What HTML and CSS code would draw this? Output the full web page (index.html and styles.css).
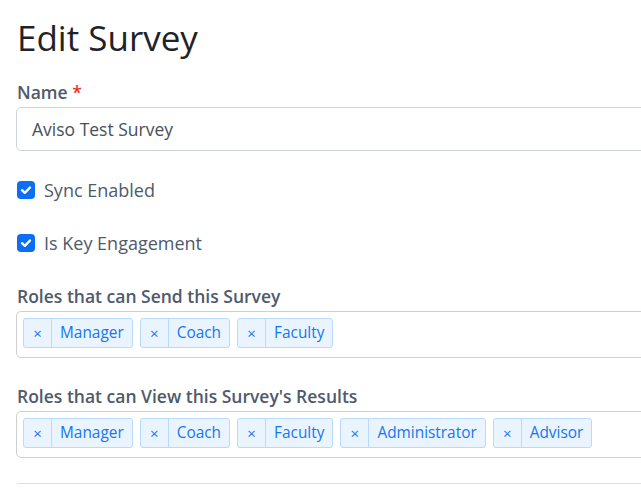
FILE: index.html
```html
<!DOCTYPE html>
<html>
<head>
<meta charset="utf-8">
<link rel="stylesheet" href="styles.css">
</head>
<body>
<div class="page">
  <h1 class="title">Edit Survey</h1>
  <div class="field">
    <label class="label">Name <span class="req">*</span></label>
    <div class="input">Aviso Test Survey</div>
  </div>
  <div class="check first">
    <span class="box"><svg viewBox="0 0 18 18" width="18" height="18"><path d="M5 9.2 L7.8 11.8 L13 6.5" fill="none" stroke="#fff" stroke-width="2.4" stroke-linecap="round" stroke-linejoin="round"/></svg></span>
    <span class="check-text">Sync Enabled</span>
  </div>
  <div class="check second">
    <span class="box"><svg viewBox="0 0 18 18" width="18" height="18"><path d="M5 9.2 L7.8 11.8 L13 6.5" fill="none" stroke="#fff" stroke-width="2.4" stroke-linecap="round" stroke-linejoin="round"/></svg></span>
    <span class="check-text">Is Key Engagement</span>
  </div>
  <div class="field roles">
    <label class="label">Roles that can Send this Survey</label>
    <div class="select">
      <span class="tag"><span class="x">×</span><span class="name">Manager</span></span>
      <span class="tag"><span class="x">×</span><span class="name">Coach</span></span>
      <span class="tag"><span class="x">×</span><span class="name">Faculty</span></span>
    </div>
  </div>
  <div class="field roles2">
    <label class="label">Roles that can View this Survey's Results</label>
    <div class="select">
      <span class="tag"><span class="x">×</span><span class="name">Manager</span></span>
      <span class="tag"><span class="x">×</span><span class="name">Coach</span></span>
      <span class="tag"><span class="x">×</span><span class="name">Faculty</span></span>
      <span class="tag"><span class="x">×</span><span class="name">Administrator</span></span>
      <span class="tag"><span class="x">×</span><span class="name">Advisor</span></span>
    </div>
  </div>
  <hr class="rule">
</div>
</body>
</html>
```
FILE: styles.css
```css
html, body {
  margin: 0;
  padding: 0;
  overflow: hidden;
  background: #fff;
}
body {
  font-family: "Open Sans", "Noto Sans", sans-serif;
  color: #212529;
}
.page {
  width: 800px;
  padding: 0 0 0 16px;
  display: flex;
  flex-direction: column;
}
.title {
  margin: 14px 0 0 0;
  font-size: 35px;
  font-weight: 400;
  line-height: 48px;
  color: #1f2328;
  padding-left: 1px;
}
.field {
  display: flex;
  flex-direction: column;
}
.field:first-of-type {
  margin-top: 19px;
}
.label {
  font-size: 17.5px;
  font-weight: 600;
  color: #4f5a6b;
  line-height: 22px;
  padding-left: 1px;
  margin-bottom: 4px;
}
.req {
  color: #e3342f;
}
.input {
  height: 42px;
  border: 1px solid #ced4da;
  border-radius: 5px;
  padding: 0 15px;
  font-size: 17.5px;
  line-height: 42px;
  color: #495057;
}
.check {
  display: flex;
  align-items: center;
  gap: 9px;
  height: 22px;
  padding-left: 1px;
}
.check.first { margin-top: 28px; }
.check.second { margin-top: 31px; }
.box {
  width: 18px;
  height: 18px;
  border-radius: 4px;
  background: #0b6ef5;
  display: flex;
}
.check-text {
  font-size: 18px;
  color: #4f5a6b;
  line-height: 22px;
}
.roles { margin-top: 31px; }
.roles2 { margin-top: 27px; }
.select {
  border: 1px solid #cfcfcf;
  border-radius: 5px;
  padding: 6px 6px 9px 6px;
  display: flex;
  gap: 7px;
}
.tag {
  display: flex;
  height: 28px;
  border: 1px solid #b7dafd;
  border-radius: 3px;
  background: #eaf4ff;
  color: #1576f0;
  font-size: 15.4px;
  line-height: 28px;
}
.tag .x {
  width: 27px;
  text-align: center;
  border-right: 1px solid #b7dafd;
  font-size: 15px;
}
.tag .name {
  padding: 0 8px;
}
.rule {
  margin: 25px 0 0 1px;
  border: 0;
  border-top: 1px solid #dedede;
  width: 100%;
}
```
